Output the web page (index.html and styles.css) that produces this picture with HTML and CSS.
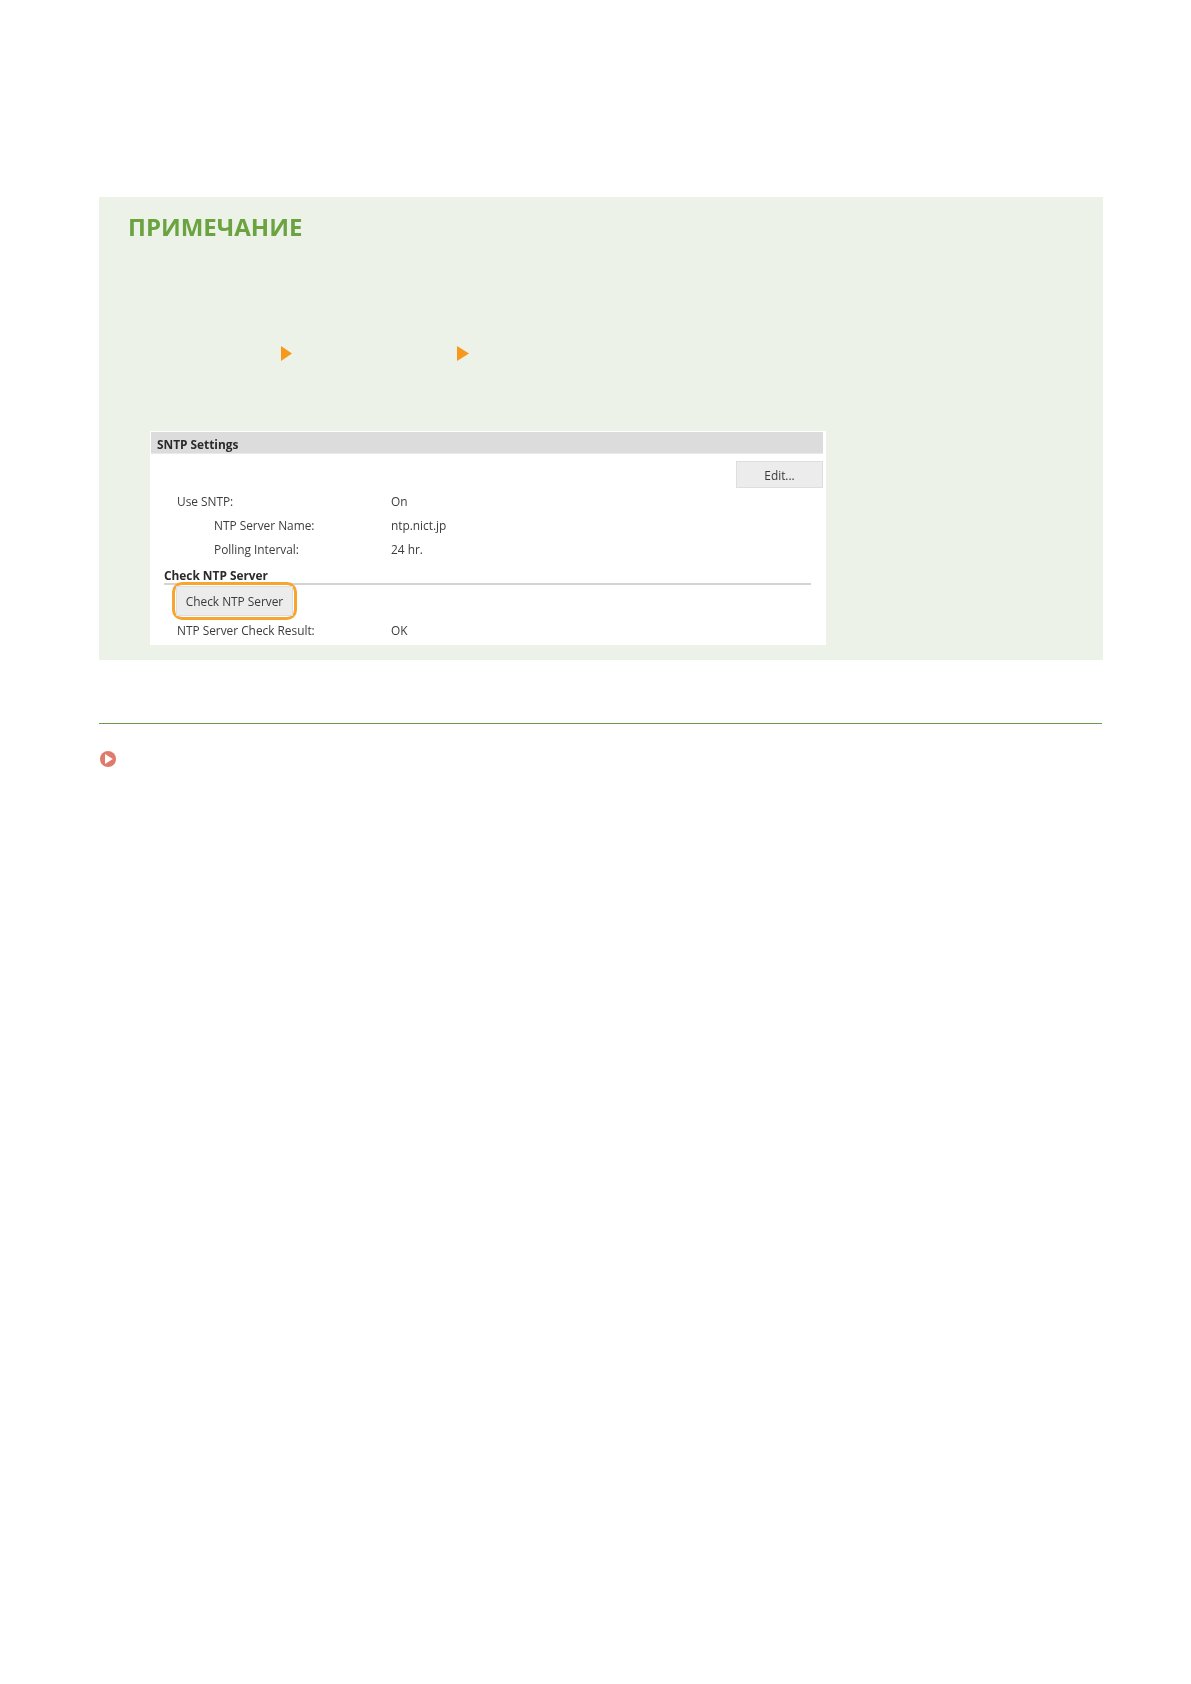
FILE: index.html
```html
<!DOCTYPE html>
<html lang="ru">
<head>
<meta charset="utf-8">
<title>Примечание</title>
<link rel="stylesheet" href="styles.css">
</head>
<body>
<main class="page">
  <section class="note">
    <h2 class="note-title">ПРИМЕЧАНИЕ</h2>
    <div class="steps">
      <svg class="arrow arrow-first" viewBox="0 0 11 15" aria-hidden="true"><polygon points="0,0 11,7.5 0,15"/></svg>
      <svg class="arrow arrow-second" viewBox="0 0 12 15" aria-hidden="true"><polygon points="0,0 12,7.5 0,15"/></svg>
    </div>
    <div class="shot">
      <div class="shot-head">SNTP Settings</div>
      <div class="shot-actions"><span class="btn btn-edit">Edit...</span></div>
      <div class="row row-first"><span class="label">Use SNTP:</span><span class="value">On</span></div>
      <div class="row row-sub row-name"><span class="label">NTP Server Name:</span><span class="value">ntp.nict.jp</span></div>
      <div class="row row-sub row-poll"><span class="label">Polling Interval:</span><span class="value">24 hr.</span></div>
      <div class="sub-head">Check NTP Server</div>
      <div class="focus"><span class="btn btn-check">Check NTP Server</span></div>
      <div class="row row-result"><span class="label">NTP Server Check Result:</span><span class="value">OK</span></div>
    </div>
  </section>
  <hr class="rule">
  <div class="link-row">
    <svg class="link-icon" viewBox="0 0 16 16" aria-hidden="true"><circle cx="8" cy="8" r="8"/><polygon class="link-play" points="5,3 12.8,8 5,13"/></svg>
  </div>
</main>
</body>
</html>
```
FILE: styles.css
```css
html, body {
  margin: 0;
  padding: 0;
  background: #ffffff;
}

.page {
  box-sizing: border-box;
  width: 1191px;
  height: 1684px;
  padding: 197px 88px 0 99px;
  font-family: "Open Sans", "Noto Sans", sans-serif;
}

.note {
  box-sizing: border-box;
  height: 463px;
  padding: 13px 0 0 29px;
  background: #edf2e9;
}

.note-title {
  margin: 0;
  height: 34px;
  font-size: 24px;
  line-height: 34px;
  font-weight: 700;
  color: #6aa33f;
  filter: blur(0.3px);
}

.steps {
  display: flex;
  height: 15px;
  margin-top: 102px;
}

.arrow {
  display: block;
  height: 15px;
  fill: #f7981d;
}

.arrow-first {
  width: 11px;
  margin-left: 153px;
}

.arrow-second {
  width: 12px;
  margin-left: 165px;
}

.shot {
  box-sizing: border-box;
  width: 676px;
  height: 214px;
  margin: 70px 0 0 22px;
  padding: 1px 3px 0 1px;
  background: #ffffff;
  font-size: 11.9px;
  letter-spacing: -0.02px;
  color: #3c3c3c;
  filter: blur(0.5px);
}

.shot-head {
  box-sizing: border-box;
  height: 22px;
  padding-left: 6px;
  background: #dcdcdc;
  border-bottom: 1px solid #e9e9e9;
  font-weight: 700;
  font-size: 11.9px;
  line-height: 24px;
  color: #2b2b2b;
}

.shot-actions {
  display: flex;
  justify-content: flex-end;
  margin-top: 7px;
}

.btn {
  box-sizing: border-box;
  display: flex;
  align-items: center;
  justify-content: center;
  background: #ececec;
  border: 1px solid #dedede;
  font-size: 11.9px;
  color: #3a3a3a;
}

.btn-edit {
  width: 87px;
  height: 27px;
  padding-top: 1px;
}

.row {
  display: flex;
  height: 16px;
  line-height: 16px;
  padding-left: 26px;
}

.row-first {
  margin-top: 5px;
}

.row-name {
  margin-top: 8px;
}

.row-poll {
  margin-top: 8px;
}

.row-sub {
  padding-left: 63px;
}

.label {
  flex: none;
  width: 214px;
}

.row-sub .label {
  width: 177px;
}

.sub-head {
  box-sizing: border-box;
  width: 647px;
  height: 18px;
  margin: 10px 0 0 13px;
  border-bottom: 2px solid #d4d4d4;
  font-weight: 700;
  font-size: 11.9px;
  line-height: 17px;
  color: #2b2b2b;
}

.focus {
  box-sizing: border-box;
  width: 125px;
  height: 38px;
  margin: -3px 0 0 21px;
  padding: 1px;
  border: 3px solid #f7a530;
  border-radius: 10px;
}

.btn-check {
  width: 117px;
  height: 30px;
}

.row-result {
  margin-top: 2px;
}

.rule {
  box-sizing: border-box;
  height: 1px;
  margin: 63px 1px 0 0;
  border: 0;
  background: #6a9a4a;
}

.link-row {
  height: 16px;
  margin-top: 27px;
  padding-left: 1px;
}

.link-icon {
  display: block;
  width: 16px;
  height: 16px;
  fill: #e07a6c;
}

.link-play {
  fill: #ffffff;
}
```
